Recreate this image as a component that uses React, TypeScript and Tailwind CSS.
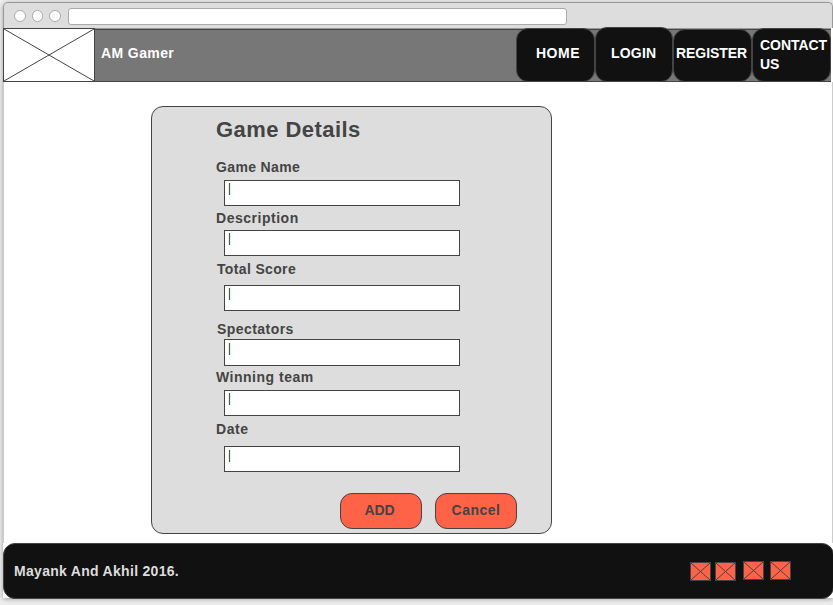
const FONT = "font-['Liberation_Sans',Arial,sans-serif]";

const nav = [
  { label: 'HOME', box: 'w-[79px] h-[54px]', text: '-mt-[4px] pl-[19px] tracking-[0.5px]' },
  { label: 'LOGIN', box: 'w-[78px] h-[55px]', text: '-mt-[2px] pl-[15px] tracking-[0.2px]' },
  { label: 'REGISTER', box: 'w-[79px] h-[53px]', text: '-mt-[4px] pl-[2px] tracking-[-0.05px]' },
  { label: 'CONTACT US', box: 'w-[79px] h-[54px]', text: 'pl-[7px] tracking-[-0.05px]' },
];

const fields = [
  { label: 'Game Name', gap: 'mt-[13px]', row: 'mt-[3px]', box: 'h-[26px] pt-[2px]', text: 'tracking-[0.35px]' },
  { label: 'Description', gap: 'mt-[2px]', row: 'mt-[2px]', box: 'h-[26px] pt-[2px]', text: 'tracking-[0.52px]' },
  { label: 'Total Score', gap: 'mt-[3px]', row: 'mt-[6px]', box: 'h-[26px] pt-[2px]', text: 'pl-px tracking-[0.35px]' },
  { label: 'Spectators', gap: 'mt-[8px]', row: '', box: 'h-[27px] pt-[3px]', text: 'pl-px tracking-[0.45px]' },
  { label: 'Winning team', gap: 'mt-[1px]', row: 'mt-[3px]', box: 'h-[26px] pt-[2px]', text: 'tracking-[0.5px]' },
  { label: 'Date', gap: 'mt-[3px]', row: 'mt-[7px]', box: 'h-[26px] pt-[3px]', text: 'tracking-[0.6px]' },
];

function CrossBox({ w, h, fill }: { w: number; h: number; fill: string }) {
  return (
    <svg width={w} height={h} viewBox={`0 0 ${w} ${h}`} className="block shrink-0">
      <rect x="0.5" y="0.5" width={w - 1} height={h - 1} fill={fill} stroke="#444" />
      <path d={`M1 1 L${w - 1} ${h - 1} M${w - 1} 1 L1 ${h - 1}`} stroke="#444" strokeWidth="1" fill="none" />
    </svg>
  );
}

function Field({ f }: { f: (typeof fields)[number] }) {
  return (
    <label className={`block ${f.gap}`}>
      <span className={`block h-5 whitespace-nowrap text-[14px] leading-5 ${f.text}`}>{f.label}</span>
      <span className={`ml-[8px] flex w-[236px] items-start border border-[#444] bg-white pl-[3px] ${f.row} ${f.box}`}>
        <span className="h-3 w-px bg-[#fff0c0]" />
        <span className="h-3 w-px bg-[#5a5064]" />
        <span className="h-3 w-px bg-[#c0ffff]" />
      </span>
    </label>
  );
}

export default function App() {
  return (
    <div className={`h-[605px] w-[833px] overflow-hidden bg-[#eee] pl-[3px] pt-[2px] font-bold text-[#444] ${FONT}`}>
      <div className="h-[596px] w-[830px] rounded-t-[5px] bg-white shadow-[0_1px_5px_rgba(0,0,0,0.35)]">
        <div className="flex h-[26px] items-start rounded-t-[5px] border border-b-0 border-[#999] bg-[#ddd] pl-[10px] pt-[5px]">
          <div className="flex gap-[6px] pt-[2px]">
            {[0, 1, 2].map((i) => (
              <span key={i} className="h-[12px] w-[11.5px] rounded-full border border-[#aaa] bg-white" />
            ))}
          </div>
          <div className="ml-[7.5px] h-[17px] w-[499px] rounded-[3px] border border-[#aaa] bg-white" />
        </div>

        <header className="flex h-[54px] w-[828px] items-end bg-[linear-gradient(#999_0_1px,#444_1px_2px,#777_2px_53px,#444_53px)]">
          <CrossBox w={92} h={54} fill="#fff" />
          <div className="flex h-[54px] w-[421px] items-center pl-[6px] text-[14px] text-white">
            <span className="-mt-[3px] tracking-[0.4px]">AM Gamer</span>
          </div>
          <nav className="flex items-end text-[14px] leading-[19px] text-white">
            {nav.map((n) => (
              <a key={n.label} className={`flex shrink-0 items-center rounded-[12px] border border-[#444] bg-[#111] ${n.box}`}>
                <span className={n.text}>{n.label}</span>
              </a>
            ))}
          </nav>
        </header>

        <main className="h-[461px] border-x border-[#ccc] pl-[147px] pt-[24px]">
          <form className="h-[428px] w-[401px] rounded-[12px] border border-[#444] bg-[#ddd] pl-[64px] pt-[9px]">
            <h1 className="h-[28px] text-[22px] leading-[28px] tracking-[0.45px]">Game Details</h1>
            {fields.map((f) => (
              <Field key={f.label} f={f} />
            ))}
            <div className="ml-[124px] mt-[21px] flex gap-[13px] text-[14px]">
              <button type="button" className="h-[36px] w-[82px] rounded-[12px] border border-[#444] bg-[#ff6347] pb-[2px] pr-[3px] tracking-[-0.1px]">ADD</button>
              <button type="button" className="h-[36px] w-[82px] rounded-[12px] border border-[#444] bg-[#ff6347] pb-[2px] tracking-[0.5px]">Cancel</button>
            </div>
          </form>
        </main>

        <footer className="flex h-[56px] w-[831px] items-center rounded-[12px] border border-[#444] bg-[#111] pl-[10px] text-[14px] text-[#ddd]">
          <span className="w-[676px] tracking-[0.3px]">Mayank And Akhil 2016.</span>
          <div className="flex items-start pb-px">
            <div className="mr-[4px] pt-px"><CrossBox w={21} h={19} fill="#ff6347" /></div>
            <div className="mr-[7px] pt-px"><CrossBox w={21} h={19} fill="#ff6347" /></div>
            <div className="mr-[6px]"><CrossBox w={21} h={19} fill="#ff6347" /></div>
            <CrossBox w={21} h={19} fill="#ff6347" />
          </div>
        </footer>
      </div>
    </div>
  );
}
